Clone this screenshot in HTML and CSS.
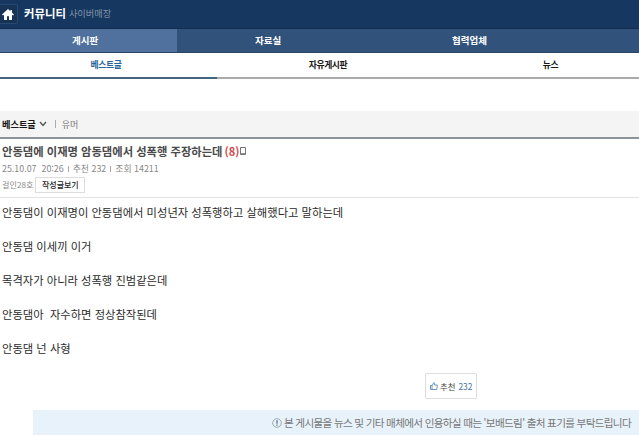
FILE: index.html
```html
<!DOCTYPE html>
<html lang="ko">
<head>
<meta charset="utf-8">
<title>커뮤니티</title>
<link rel="stylesheet" href="styles.css">
</head>
<body>
<header class="top">
  <a class="home"><svg width="12" height="11" viewBox="0 0 12 11"><path d="M6 0 0 5.6 1 6.5 2 5.7V11H5V7.3H7V11H10V5.7L11 6.5 12 5.6 10 3.7V1H8.4V2.2Z" fill="#fff"/></svg></a>
  <h1>커뮤니티</h1><span class="sub">사이버매장</span>
</header>
<nav class="tabs"><a class="on"><span class="tab-a">게시판</span></a><a><span class="tab-b">자료실</span></a><a><span class="tab-c">협력업체</span></a></nav>
<nav class="subtabs"><a class="on">베스트글</a><a>자유게시판</a><a>뉴스</a></nav>
<div class="crumb"><strong>베스트글</strong><svg width="8" height="6" viewBox="0 0 8 6"><path d="M1 1 4 4.5 7 1" fill="none" stroke="#555" stroke-width="1.4"/></svg><i></i><span>유머</span></div>
<section class="head">
  <h2><span class="subject">안동댐에 이재명 암동댐에서 성폭행 주장하는데</span><b>(8)</b><svg width="6" height="8" viewBox="0 0 6 8"><path d="M.5.5H5.5V7.5H.5ZM.5 6.7H5.5" fill="none" stroke="#777"/></svg></h2>
  <div class="meta"><span class="date">25.10.07&nbsp; 20:26</span><i></i><span class="rec">추천 232</span><i></i><span>조회 14211</span></div>
  <div class="author"><span>걸인28호</span><button>작성글보기</button></div>
</section>
<article>
  <p>안동댐이 이재명이 안동댐에서 미성년자 성폭행하고 살해했다고 말하는데</p>
  <p>안동댐 이세끼 이거</p>
  <p>목격자가 아니라 성폭행 진범같은데</p>
  <p>안동댐아&nbsp; 자수하면 정상참작된데</p>
  <p>안동댐 넌 사형</p>
</article>
<button class="vote"><svg width="8" height="8" viewBox="0 0 8 8"><path d="M.5 3.5H2V7.5H.5ZM2 3.7 3.8.5Q5 .5 4.6 3H7.3L6.8 7.5H2" fill="none" stroke="#4d7da8" stroke-width=".8"/></svg><span>추천</span><em>232</em></button>
<footer><svg width="10" height="10" viewBox="0 0 10 10"><circle cx="5" cy="5" r="4.3" fill="none" stroke="#7f9b9c" stroke-width=".8"/><path d="M5 2.3V5.7M5 6.6V7.7" stroke="#557" stroke-width="1.1"/></svg><span>본 게시물을 뉴스 및 기타 매체에서 인용하실 때는 '보배드림' 출처 표기를 부탁드립니다</span></footer>
</body>
</html>
```
FILE: styles.css
```css
* { box-sizing: border-box; }
body { margin: 0; width: 639px; height: 436px; overflow: hidden; background: #fff; color: #2b2b2b; font-family: "Noto Sans CJK KR", sans-serif; white-space: nowrap; }
h1, h2, p { margin: 0; }
svg { flex: none; }
button { background: #fff; font-family: inherit; padding: 0; }
.top { height: 29px; display: flex; align-items: center; background: #163860; border-bottom: 1px solid #122d50; padding-bottom: 2px; }
.home { width: 18px; height: 20px; margin-top: 2px; display: flex; align-items: center; justify-content: center; padding-right: 1px; background: #173457; border: 1px solid #284a70; border-left: 0; border-radius: 0 2px 2px 0; }
.top h1 { margin-left: 6px; margin-top: -1px; color: #fff; font-size: 11.4px; line-height: 20px; }
.sub { margin-left: 3px; margin-top: -1px; color: #8594ab; font-size: 9.2px; }
.tabs { height: 24px; display: grid; grid-template-columns: 177px 181px 1fr; background: #31527b; border-bottom: 1px solid #294668; color: #fff; font-size: 9.5px; line-height: 22px; font-weight: 700; }
.tabs .on { background: #50719e; }
.tab-a { margin-left: 72px; }
.tab-b { margin-left: 78px; }
.tab-c { margin-left: 94px; }
.subtabs { height: 24px; display: grid; grid-template-columns: 217px 1fr 177px; color: #181818; font-size: 8.8px; line-height: 24px; font-weight: 700; text-align: center; letter-spacing: -.35px; }
.subtabs a { border-bottom: 2px solid #aaa; }
.subtabs .on { color: #2d6399; border-color: #41657f; padding-right: 5px; }
.subtabs a:nth-child(2) { padding-right: 23px; }
.crumb { height: 28px; margin-top: 34px; padding-left: 2px; display: flex; align-items: center; background: #f4f4f4; border-bottom: 2px solid #8b939b; font-size: 9px; color: #777; }
.crumb strong { color: #181818; font-size: 9.2px; }
.crumb svg { margin-left: 3px; }
.crumb i { width: 1px; height: 8px; margin: 0 6px 0 8px; background: #aaa; }
.head { height: 59px; padding-left: 2px; border-bottom: 1px solid #e3e3e3; }
.head h2 { height: 25px; padding-bottom: 1px; display: flex; align-items: center; color: #4a4a4a; font-size: 11.3px; font-weight: 700; }
.head b { margin: 0 1px 0 2px; color: #cf4b4b; font-size: 11px; font-weight: 700; }
.meta { height: 9px; display: flex; align-items: center; color: #888; font-size: 8.9px; }
.meta i { width: 1px; height: 6px; margin: 0 4px; background: #aaa; }
.author { height: 15px; margin-top: 4px; display: flex; align-items: center; color: #888; font-size: 8.1px; }
.author button { width: 50px; height: 16px; margin-left: 2px; border: 1px solid #ddd; color: #222; font-size: 8px; line-height: 13px; font-weight: 500; }
article { padding: 4px 0 0 2px; font-size: 11.3px; }
article p { height: 34px; line-height: 20px; }
.vote { display: flex; align-items: center; width: 52px; height: 26px; margin: 1px 0 0 425px; padding-left: 4px; border: 1px solid #dcdfe2; border-radius: 1px; color: #444; font-size: 8.4px; }
.vote span { margin-left: 2px; }
.vote em { margin-left: 3px; color: #4a759e; font-style: normal; }
footer { height: 25px; margin: 11px 0 0 33px; padding-right: 8px; display: flex; align-items: center; justify-content: flex-end; gap: 2px; background: #e8f2fa; color: #777; font-size: 10.6px; letter-spacing: -.68px; }
```
